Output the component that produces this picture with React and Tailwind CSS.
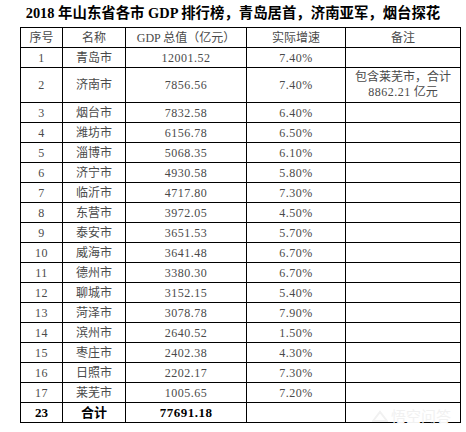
const rows = [
  ['1', '青岛市', '12001.52', '7.40%'],
  ['2', '济南市', '7856.56', '7.40%', true],
  ['3', '烟台市', '7832.58', '6.40%'],
  ['4', '潍坊市', '6156.78', '6.50%'],
  ['5', '淄博市', '5068.35', '6.10%'],
  ['6', '济宁市', '4930.58', '5.80%'],
  ['7', '临沂市', '4717.80', '7.30%'],
  ['8', '东营市', '3972.05', '4.50%'],
  ['9', '泰安市', '3651.53', '5.70%'],
  ['10', '威海市', '3641.48', '6.70%'],
  ['11', '德州市', '3380.30', '6.70%'],
  ['12', '聊城市', '3152.15', '5.40%'],
  ['13', '菏泽市', '3078.78', '7.90%'],
  ['14', '滨州市', '2640.52', '1.50%'],
  ['15', '枣庄市', '2402.38', '4.30%'],
  ['16', '日照市', '2202.17', '7.30%'],
  ['17', '莱芜市', '1005.65', '7.20%'],
]

const cell = 'border border-black p-0 text-center align-middle'
const num = 'border border-black p-0 text-center align-middle tracking-[0.5px]'

export default function App() {
  return (
    <div className="relative w-[466px] h-[432px] bg-white font-['Liberation_Serif','Noto_Sans_CJK_SC',serif]">
      <h1 className="h-[27px] pt-[3px] text-center text-[14.4px] leading-[20px] font-bold text-black">
        2018 年山东省各市 GDP 排行榜，青岛居首，济南亚军，烟台探花
      </h1>
      <table className="ml-[20px] w-[440px] table-fixed border-collapse text-[12px] leading-[14px] text-[#4a4a4a]">
        <colgroup>
          <col className="w-[42px]" />
          <col className="w-[63px]" />
          <col className="w-[121px]" />
          <col className="w-[99px]" />
          <col className="w-[115px]" />
        </colgroup>
        <tbody>
          <tr className="h-[20px]">
            <td className={cell}>序号</td>
            <td className={cell}>名称</td>
            <td className={cell}>GDP 总值（亿元）</td>
            <td className={cell}>实际增速</td>
            <td className={cell}>备注</td>
          </tr>
          {rows.map(([no, name, gdp, rate, note]) => (
            <tr key={no} className={note ? 'h-[35px]' : 'h-[20px]'}>
              <td className={num}>{no}</td>
              <td className={cell}>{name}</td>
              <td className={num}>{gdp}</td>
              <td className={num}>{rate}</td>
              <td className={cell}>
                {note && (
                  <div className="leading-[15px]">
                    包含莱芜市，合计
                    <br />
                    <span className="tracking-[0.5px]">8862.21</span> 亿元
                  </div>
                )}
              </td>
            </tr>
          ))}
          <tr className="h-[20px] font-bold text-black text-[13px]">
            <td className={cell}>23</td>
            <td className={cell}>合计</td>
            <td className={num}>77691.18</td>
            <td className={cell}></td>
            <td className={cell}></td>
          </tr>
        </tbody>
      </table>
      {/* faint watermark */}
      <div className="absolute left-[372px] top-[408px] flex items-center gap-[3px] text-[15px] leading-[16px] font-['Noto_Sans_CJK_SC',sans-serif] text-[#f1f1f1]">
        <svg width="16" height="14" viewBox="0 0 16 14" fill="none" stroke="#f1f1f1" strokeWidth="2">
          <path d="M1 12 L8 3 L15 12 Z" />
        </svg>
        <span>悟空问答</span>
      </div>
    </div>
  )
}
